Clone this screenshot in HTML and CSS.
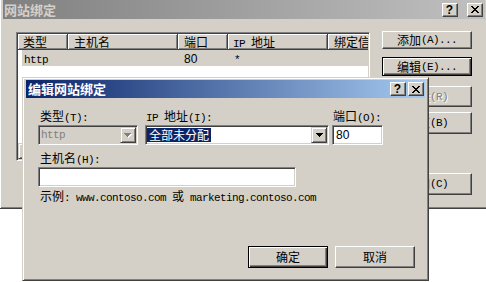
FILE: index.html
```html
<!DOCTYPE html>
<html>
<head>
<meta charset="utf-8">
<link rel="stylesheet" href="styles.css">
</head>
<body>
<div class="win bgwin">
  <div class="cap inactive">
    <span class="cap-title">网站绑定</span>
    <span class="cbtn help bghelp">?</span>
    <span class="cbtn close bgclose"><svg width="8" height="7" viewBox="0 0 8 7"><path d="M0 0h2v1H0zM6 0h2v1H6zM1 1h2v1H1zM5 1h2v1H5zM2 2h4v1H2zM3 3h2v1H3zM2 4h4v1H2zM1 5h2v1H1zM5 5h2v1H5zM0 6h2v1H0zM6 6h2v1H6z"/></svg></span>
  </div>
  <div class="bgbody">
    <div class="listview">
      <div class="lv-in">
        <div class="lv-head">
          <div class="hc c1">类型</div>
          <div class="hc c2">主机名</div>
          <div class="hc c3">端口</div>
          <div class="hc c4"><span class="l">IP </span>地址</div>
          <div class="hc c5">绑定信息</div>
        </div>
        <div class="lv-row">
          <div class="rc r1"><span class="l">http</span></div>
          <div class="rc r2"></div>
          <div class="rc r3"><span class="n">80</span></div>
          <div class="rc r4"><span class="l">*</span></div>
        </div>
        <div class="lv-fill"></div>
        <div class="lv-hscroll"><span class="sbtn"></span></div>
      </div>
    </div>
    <div class="bgbtns">
      <div class="btn b1">添加<span class="l">(A)...</span></div>
      <div class="btn def b2">编辑<span class="l">(E)...</span></div>
      <div class="btn dis b3">删除<span class="l">(R)</span></div>
      <div class="btn b4">浏览<span class="l">(B)</span></div>
      <div class="btn b5">关闭<span class="l">(C)</span></div>
    </div>
  </div>
</div>

<div class="win dlg">
  <div class="cap active">
    <span class="cap-title">编辑网站绑定</span>
    <span class="cbtn help dhelp">?</span>
    <span class="cbtn close dclose"><svg width="8" height="7" viewBox="0 0 8 7"><path d="M0 0h2v1H0zM6 0h2v1H6zM1 1h2v1H1zM5 1h2v1H5zM2 2h4v1H2zM3 3h2v1H3zM2 4h4v1H2zM1 5h2v1H1zM5 5h2v1H5zM0 6h2v1H0zM6 6h2v1H6z"/></svg></span>
  </div>
  <div class="dbody">
    <div class="row1">
      <div class="col col-type">
        <div class="lab">类型<span class="l">(T):</span></div>
        <div class="combo dis">
          <div class="val"><span class="l">http</span></div>
          <div class="arrow"><svg width="8" height="5" viewBox="0 0 8 5"><path fill="#fff" d="M1 1h7v1H1zM2 2h5v1H2zM3 3h3v1H3zM4 4h1v1H4z"/><path fill="#808080" d="M0 0h7v1H0zM1 1h5v1H1zM2 2h3v1H2zM3 3h1v1H3z"/></svg></div>
        </div>
      </div>
      <div class="col col-ip">
        <div class="lab"><span class="l">IP </span>地址<span class="l">(I):</span></div>
        <div class="combo">
          <div class="val"><span class="sel">全部未分配</span></div>
          <div class="arrow"><svg width="7" height="4" viewBox="0 0 7 4"><path d="M0 0h7v1H0zM1 1h5v1H1zM2 2h3v1H2zM3 3h1v1H3z"/></svg></div>
        </div>
      </div>
      <div class="col col-port">
        <div class="lab">端口<span class="l">(O):</span></div>
        <div class="edit port"><span class="n">80</span></div>
      </div>
    </div>
    <div class="lab hostlab">主机名<span class="l">(H):</span></div>
    <div class="edit host"></div>
    <div class="example">示例<span class="l">: www.contoso.com </span>或<span class="l"> marketing.contoso.com</span></div>
    <div class="dbtns">
      <div class="btn def dbtn">确定</div>
      <div class="btn dbtn">取消</div>
    </div>
  </div>
</div>
</body>
</html>
```

FILE: styles.css
```css
* { box-sizing: border-box; }
html, body { margin: 0; padding: 0; }
body {
  width: 486px; height: 282px; overflow: hidden; position: relative;
  background: #fff; color: #000;
  font-family: "Noto Sans CJK SC", "Noto Sans CJK JP", sans-serif;
  font-size: 12px; line-height: 14px;
}
.l { font-family: "Liberation Mono", "DejaVu Sans Mono", monospace; font-size: 11px; letter-spacing: -0.6px; }
.n { font-family: "Liberation Sans", sans-serif; }

/* window frame */
.win {
  background: #d4d0c8;
  border: 1px solid; border-color: #d4d0c8 #404040 #404040 #d4d0c8;
  box-shadow: inset 1px 1px #fff, inset -1px -1px #808080;
  display: flex; flex-direction: column;
}
.bgwin { margin: -4px 0 0 -1px; width: 490px; height: 213px; padding: 3px; }
.dlg { position: absolute; left: 22px; top: 77px; width: 407px; height: 204px; padding: 2px 3px 3px 3px; }

/* caption */
.cap { flex: none; display: flex; align-items: center; height: 19px; padding-left: 1px; }
.cap.inactive { background: linear-gradient(to right, #808080, #c0c0c0); color: #d4d0c8; }
.cap.active { height: 18px; padding-left: 2px; background: linear-gradient(to right, #0a246a, #a6caf0); color: #fff; }
.cap-title { flex: 1; font-weight: bold; font-size: 13px; white-space: nowrap; }
.cbtn {
  flex: none; width: 16px; height: 14px;
  display: flex; align-items: center; justify-content: center;
  background: #d4d0c8; color: #000;
  border: 1px solid; border-color: #fff #404040 #404040 #fff;
  box-shadow: inset -1px -1px #808080;
}
.cbtn.help { font-family: "Liberation Sans", sans-serif; font-weight: bold; font-size: 12px; line-height: 12px; padding-right: 1px; }
.cbtn svg { display: block; margin-right: 1px; }
.bghelp { margin-right: 9px; }
.bgclose { margin-right: 2px; }
.dhelp { margin-right: 2px; }
.dclose { margin-right: 1px; }

/* background window body */
.bgbody { flex: 1; display: flex; align-items: flex-start; }
.listview {
  flex: none; margin: 13px 0 0 13px; width: 354px; height: 129px; padding: 1px;
  background: #fff;
  border: 1px solid; border-color: #808080 #fff #fff #808080;
  box-shadow: inset 1px 1px #404040, inset -1px -1px #d4d0c8;
  display: flex;
}
.lv-in { flex: 1; overflow: hidden; display: flex; flex-direction: column; }
.lv-head { flex: none; display: flex; height: 16px; }
.hc {
  flex: none; height: 16px; padding-left: 6px; line-height: 15px;
  background: #d4d0c8; white-space: nowrap;
  border-right: 1px solid #404040; border-bottom: 1px solid #404040;
  box-shadow: inset 1px 1px #fff, inset -1px -1px #808080;
}
.c1 { width: 50px; padding-left: 5px; }
.c2 { width: 110px; }
.c3 { width: 50px; }
.c4 { width: 100px; padding-left: 5px; }
.c5 { width: 100px; }
.lv-row { flex: none; display: flex; height: 16px; margin-left: 4px; background: #d4d0c8; line-height: 16px; }
.rc { flex: none; white-space: nowrap; padding-left: 6px; }
.r1 { width: 46px; padding-left: 2px; }
.r2 { width: 110px; }
.r3 { width: 50px; }
.r4 { flex: 1; }
.lv-fill { flex: 1; }
.lv-hscroll { flex: none; height: 16px; display: flex; background: #eceae6; }
.sbtn {
  width: 16px; height: 16px; background: #d4d0c8;
  border: 1px solid; border-color: #d4d0c8 #404040 #404040 #d4d0c8;
  box-shadow: inset 1px 1px #fff, inset -1px -1px #808080;
}

.bgbtns { flex: none; width: 90px; margin-left: 12px; display: flex; flex-direction: column; }

/* buttons */
.btn {
  flex: none; display: flex; align-items: center; justify-content: center;
  white-space: nowrap; background: #d4d0c8;
  border: 1px solid; border-color: #fff #404040 #404040 #fff;
  box-shadow: inset -1px -1px #808080;
}
.btn.def { border-color: #000; box-shadow: inset 1px 1px #fff, inset -1px -1px #404040, inset -2px -2px #808080; }
.btn.dis { color: #808080; text-shadow: 1px 1px #fff; }
.b1 { margin-top: 12px; height: 18px; }
.b2 { margin-top: 8px; height: 19px; }
.b3 { margin-top: 10px; height: 21px; }
.b4 { margin-top: 5px; height: 22px; }
.b5 { margin-top: 39px; height: 22px; }

/* dialog body */
.dbody { flex: 1; display: flex; flex-direction: column; padding: 11px 10px 9px 12px; }
.row1 { display: flex; }
.col { flex: none; display: flex; flex-direction: column; }
.col-type { width: 100px; margin-right: 7px; }
.col-ip { width: 184px; margin-right: 3px; }
.col-port { width: 51px; }
.lab { height: 14px; margin-bottom: 2px; padding-left: 1px; white-space: nowrap; }
.col-type .lab { padding-left: 2px; }
.combo, .edit {
  height: 20px; padding: 1px; background: #fff;
  border: 1px solid; border-color: #808080 #fff #fff #808080;
  box-shadow: inset 1px 1px #404040, inset -1px -1px #d4d0c8;
}
.combo { display: flex; }
.combo.dis { background: #d4d0c8; color: #808080; }
.val { flex: 1; display: flex; align-items: center; overflow: hidden; white-space: nowrap; }
.combo.dis .val { padding-left: 1px; }
.sel { background: #0a246a; color: #fff; padding: 0 2px; height: 14px; line-height: 14px; }
.arrow {
  flex: none; width: 16px; height: 16px;
  display: flex; align-items: center; justify-content: center;
  background: #d4d0c8;
  border: 1px solid; border-color: #d4d0c8 #404040 #404040 #d4d0c8;
  box-shadow: inset 1px 1px #fff, inset -1px -1px #808080;
}
.arrow svg { display: block; }
.edit.port { display: flex; align-items: center; padding-left: 3px; }
.hostlab { margin-top: 6px; padding-left: 2px; }
.edit.host { width: 258px; }
.example { margin-top: 2px; padding-left: 2px; white-space: nowrap; }
.dbtns { margin-top: auto; display: flex; justify-content: flex-end; gap: 7px; }
.dbtn { width: 80px; height: 22px; }
```
